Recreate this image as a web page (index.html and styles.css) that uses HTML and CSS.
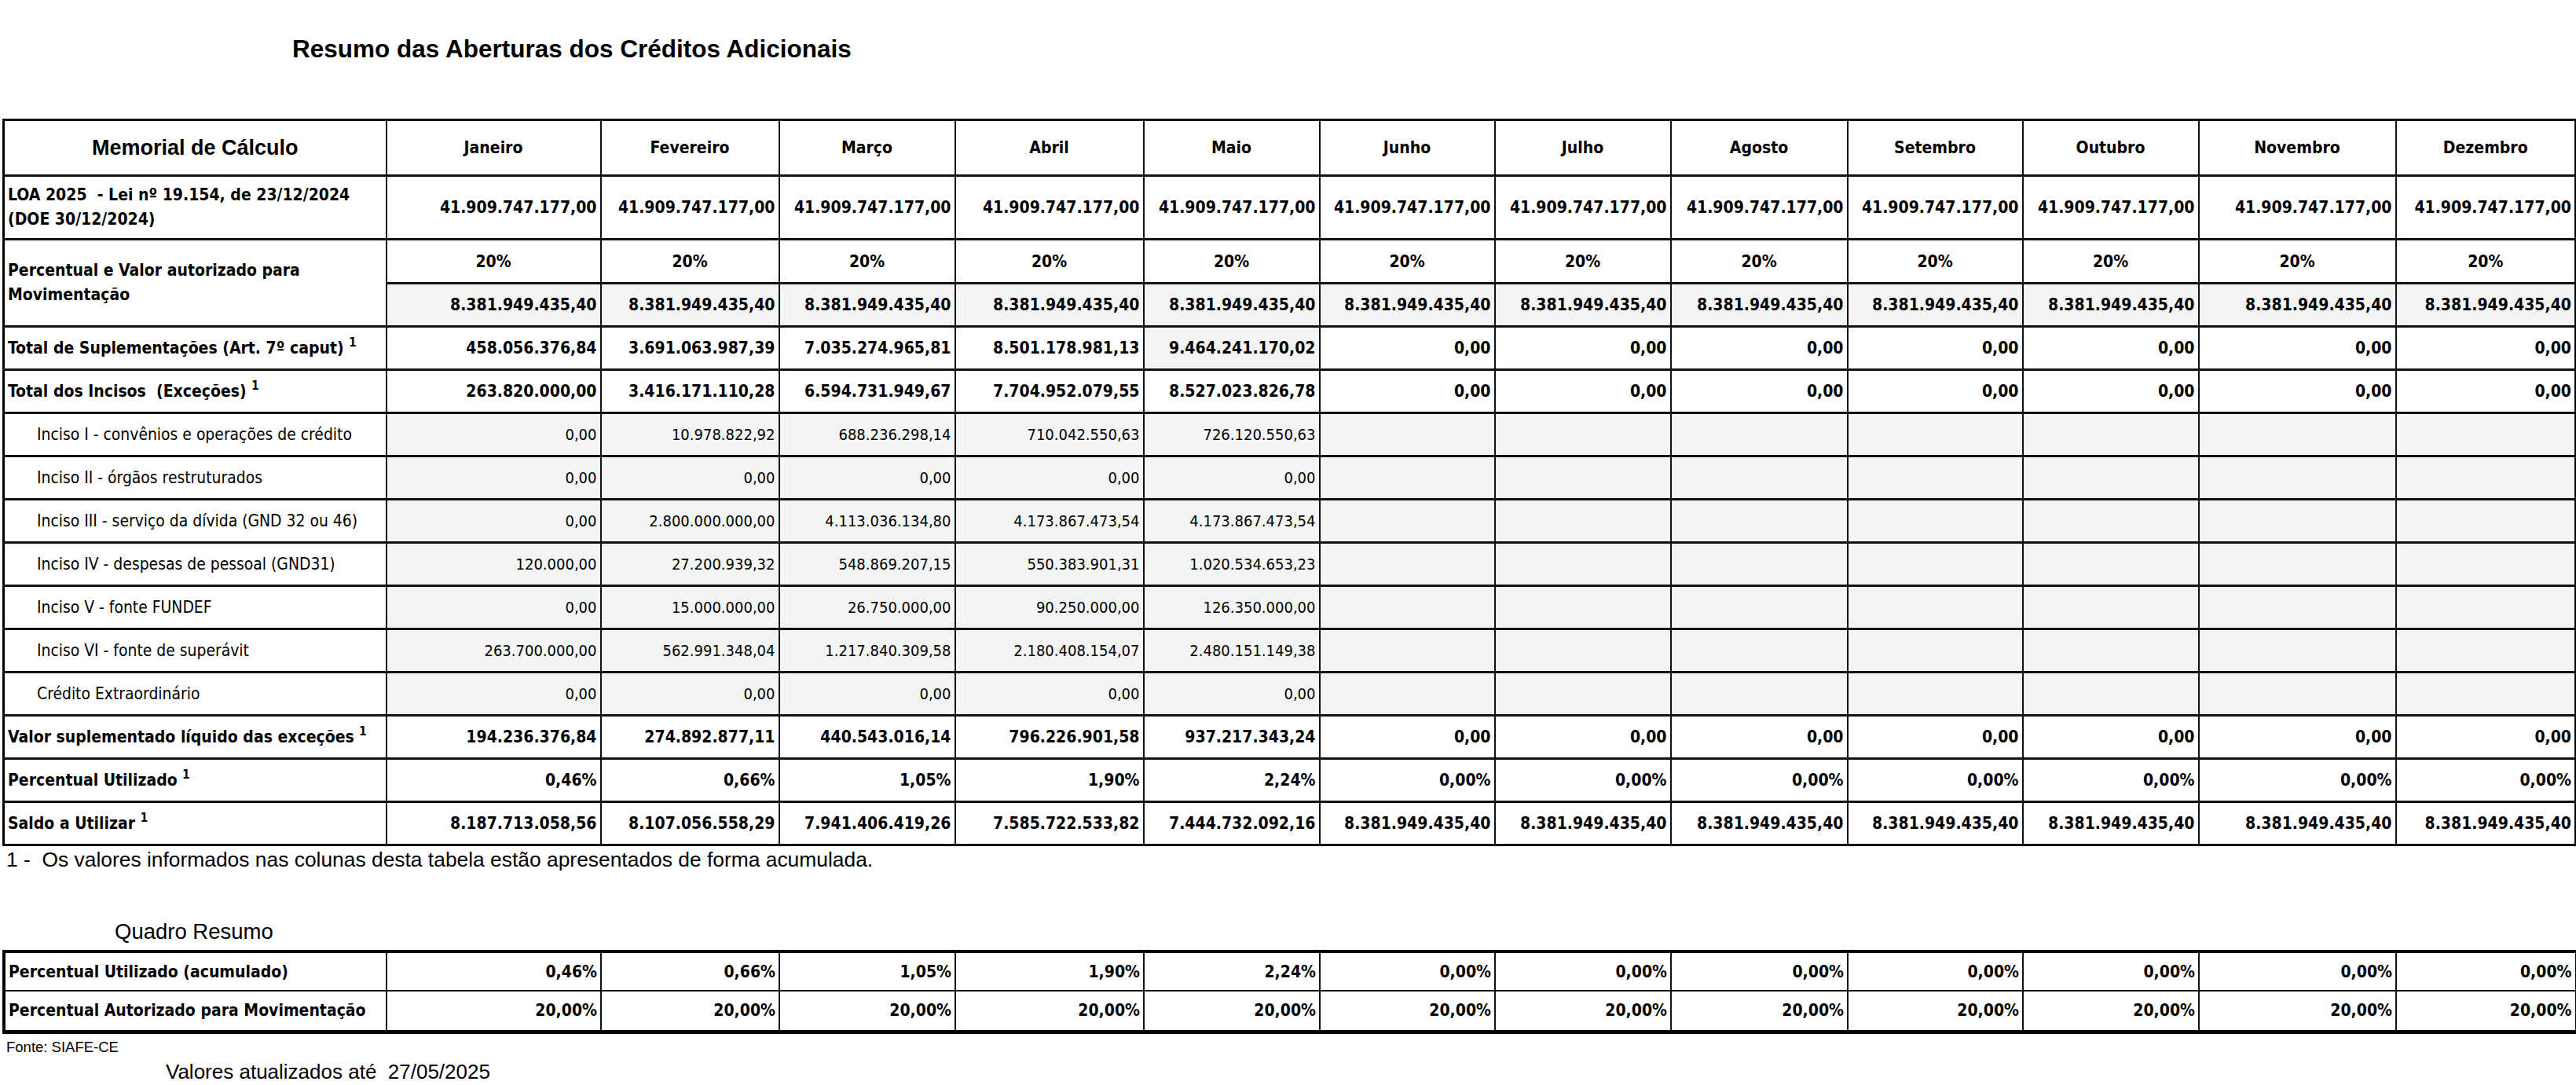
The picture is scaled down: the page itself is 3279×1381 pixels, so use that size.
FILE: index.html
```html
<!DOCTYPE html>
<html lang="pt-BR">
<head>
<meta charset="utf-8">
<title>Resumo das Aberturas dos Créditos Adicionais</title>
<link rel="stylesheet" href="styles.css">
</head>
<body>
<h1 class="title">Resumo das Aberturas dos Créditos Adicionais</h1>
<table class="grid memo">
<colgroup>
<col class="c-label"><col class="c-jan"><col class="c-fev"><col class="c-mar"><col class="c-abr"><col class="c-mai"><col class="c-jun"><col class="c-jul"><col class="c-ago"><col class="c-set"><col class="c-out"><col class="c-nov"><col class="c-dez">
</colgroup>
<tr class="r-head">
<th class="memorial">Memorial de Cálculo</th>
<th>Janeiro</th><th>Fevereiro</th><th>Março</th><th>Abril</th><th>Maio</th><th>Junho</th><th>Julho</th><th>Agosto</th><th>Setembro</th><th>Outubro</th><th>Novembro</th><th>Dezembro</th>
</tr>
<tr class="r-loa">
<td class="lab lab-loa">LOA 2025&nbsp; - Lei nº 19.154, de 23/12/2024<br>(DOE 30/12/2024)</td>
<td class="num">41.909.747.177,00</td><td class="num">41.909.747.177,00</td><td class="num">41.909.747.177,00</td><td class="num">41.909.747.177,00</td><td class="num">41.909.747.177,00</td><td class="num">41.909.747.177,00</td><td class="num">41.909.747.177,00</td><td class="num">41.909.747.177,00</td><td class="num">41.909.747.177,00</td><td class="num">41.909.747.177,00</td><td class="num">41.909.747.177,00</td><td class="num">41.909.747.177,00</td>
</tr>
<tr class="r-pct">
<td class="lab lab-two" rowspan="2">Percentual e Valor autorizado para<br>Movimentação</td>
<td class="ctr">20%</td><td class="ctr">20%</td><td class="ctr">20%</td><td class="ctr">20%</td><td class="ctr">20%</td><td class="ctr">20%</td><td class="ctr">20%</td><td class="ctr">20%</td><td class="ctr">20%</td><td class="ctr">20%</td><td class="ctr">20%</td><td class="ctr">20%</td>
</tr>
<tr class="r-val">
<td class="num shade">8.381.949.435,40</td><td class="num shade">8.381.949.435,40</td><td class="num shade">8.381.949.435,40</td><td class="num shade">8.381.949.435,40</td><td class="num shade">8.381.949.435,40</td><td class="num shade">8.381.949.435,40</td><td class="num shade">8.381.949.435,40</td><td class="num shade">8.381.949.435,40</td><td class="num shade">8.381.949.435,40</td><td class="num shade">8.381.949.435,40</td><td class="num shade">8.381.949.435,40</td><td class="num shade">8.381.949.435,40</td>
</tr>
<tr class="r-row">
<td class="lab">Total de Suplementações (Art. 7º caput) <sup>1</sup></td>
<td class="num">458.056.376,84</td><td class="num">3.691.063.987,39</td><td class="num">7.035.274.965,81</td><td class="num">8.501.178.981,13</td><td class="num shade">9.464.241.170,02</td><td class="num">0,00</td><td class="num">0,00</td><td class="num">0,00</td><td class="num">0,00</td><td class="num">0,00</td><td class="num">0,00</td><td class="num">0,00</td>
</tr>
<tr class="r-row">
<td class="lab">Total dos Incisos&nbsp; (Exceções) <sup>1</sup></td>
<td class="num">263.820.000,00</td><td class="num">3.416.171.110,28</td><td class="num">6.594.731.949,67</td><td class="num">7.704.952.079,55</td><td class="num">8.527.023.826,78</td><td class="num">0,00</td><td class="num">0,00</td><td class="num">0,00</td><td class="num">0,00</td><td class="num">0,00</td><td class="num">0,00</td><td class="num">0,00</td>
</tr>
<tr class="r-row r-sub">
<td class="lab sub">Inciso I - convênios e operações de crédito</td>
<td class="num shade">0,00</td><td class="num shade">10.978.822,92</td><td class="num shade">688.236.298,14</td><td class="num shade">710.042.550,63</td><td class="num shade">726.120.550,63</td><td class="shade"></td><td class="shade"></td><td class="shade"></td><td class="shade"></td><td class="shade"></td><td class="shade"></td><td class="shade"></td>
</tr>
<tr class="r-row r-sub">
<td class="lab sub">Inciso II - órgãos restruturados</td>
<td class="num shade">0,00</td><td class="num shade">0,00</td><td class="num shade">0,00</td><td class="num shade">0,00</td><td class="num shade">0,00</td><td class="shade"></td><td class="shade"></td><td class="shade"></td><td class="shade"></td><td class="shade"></td><td class="shade"></td><td class="shade"></td>
</tr>
<tr class="r-row r-sub">
<td class="lab sub">Inciso III - serviço da dívida (GND 32 ou 46)</td>
<td class="num shade">0,00</td><td class="num shade">2.800.000.000,00</td><td class="num shade">4.113.036.134,80</td><td class="num shade">4.173.867.473,54</td><td class="num shade">4.173.867.473,54</td><td class="shade"></td><td class="shade"></td><td class="shade"></td><td class="shade"></td><td class="shade"></td><td class="shade"></td><td class="shade"></td>
</tr>
<tr class="r-row r-sub">
<td class="lab sub">Inciso IV - despesas de pessoal (GND31)</td>
<td class="num shade">120.000,00</td><td class="num shade">27.200.939,32</td><td class="num shade">548.869.207,15</td><td class="num shade">550.383.901,31</td><td class="num shade">1.020.534.653,23</td><td class="shade"></td><td class="shade"></td><td class="shade"></td><td class="shade"></td><td class="shade"></td><td class="shade"></td><td class="shade"></td>
</tr>
<tr class="r-row r-sub">
<td class="lab sub">Inciso V - fonte FUNDEF</td>
<td class="num shade">0,00</td><td class="num shade">15.000.000,00</td><td class="num shade">26.750.000,00</td><td class="num shade">90.250.000,00</td><td class="num shade">126.350.000,00</td><td class="shade"></td><td class="shade"></td><td class="shade"></td><td class="shade"></td><td class="shade"></td><td class="shade"></td><td class="shade"></td>
</tr>
<tr class="r-row r-sub">
<td class="lab sub">Inciso VI - fonte de superávit</td>
<td class="num shade">263.700.000,00</td><td class="num shade">562.991.348,04</td><td class="num shade">1.217.840.309,58</td><td class="num shade">2.180.408.154,07</td><td class="num shade">2.480.151.149,38</td><td class="shade"></td><td class="shade"></td><td class="shade"></td><td class="shade"></td><td class="shade"></td><td class="shade"></td><td class="shade"></td>
</tr>
<tr class="r-row r-sub">
<td class="lab sub">Crédito Extraordinário</td>
<td class="num shade">0,00</td><td class="num shade">0,00</td><td class="num shade">0,00</td><td class="num shade">0,00</td><td class="num shade">0,00</td><td class="shade"></td><td class="shade"></td><td class="shade"></td><td class="shade"></td><td class="shade"></td><td class="shade"></td><td class="shade"></td>
</tr>
<tr class="r-row">
<td class="lab">Valor suplementado líquido das exceções <sup>1</sup></td>
<td class="num">194.236.376,84</td><td class="num">274.892.877,11</td><td class="num">440.543.016,14</td><td class="num">796.226.901,58</td><td class="num">937.217.343,24</td><td class="num">0,00</td><td class="num">0,00</td><td class="num">0,00</td><td class="num">0,00</td><td class="num">0,00</td><td class="num">0,00</td><td class="num">0,00</td>
</tr>
<tr class="r-row">
<td class="lab">Percentual Utilizado <sup>1</sup></td>
<td class="num">0,46%</td><td class="num">0,66%</td><td class="num">1,05%</td><td class="num">1,90%</td><td class="num">2,24%</td><td class="num">0,00%</td><td class="num">0,00%</td><td class="num">0,00%</td><td class="num">0,00%</td><td class="num">0,00%</td><td class="num">0,00%</td><td class="num">0,00%</td>
</tr>
<tr class="r-row">
<td class="lab">Saldo a Utilizar <sup>1</sup></td>
<td class="num">8.187.713.058,56</td><td class="num">8.107.056.558,29</td><td class="num">7.941.406.419,26</td><td class="num">7.585.722.533,82</td><td class="num">7.444.732.092,16</td><td class="num">8.381.949.435,40</td><td class="num">8.381.949.435,40</td><td class="num">8.381.949.435,40</td><td class="num">8.381.949.435,40</td><td class="num">8.381.949.435,40</td><td class="num">8.381.949.435,40</td><td class="num">8.381.949.435,40</td>
</tr>
</table>
<p class="note">1 -&nbsp; Os valores informados nas colunas desta tabela estão apresentados de forma acumulada.</p>
<h2 class="quadro">Quadro Resumo</h2>
<table class="grid resumo">
<colgroup>
<col class="c-label"><col class="c-jan"><col class="c-fev"><col class="c-mar"><col class="c-abr"><col class="c-mai"><col class="c-jun"><col class="c-jul"><col class="c-ago"><col class="c-set"><col class="c-out"><col class="c-nov"><col class="c-dez">
</colgroup>
<tr class="r-sum r-sum-1">
<td class="lab">Percentual Utilizado (acumulado)</td>
<td class="num">0,46%</td><td class="num">0,66%</td><td class="num">1,05%</td><td class="num">1,90%</td><td class="num">2,24%</td><td class="num">0,00%</td><td class="num">0,00%</td><td class="num">0,00%</td><td class="num">0,00%</td><td class="num">0,00%</td><td class="num">0,00%</td><td class="num">0,00%</td>
</tr>
<tr class="r-sum r-sum-2">
<td class="lab">Percentual Autorizado para Movimentação</td>
<td class="num">20,00%</td><td class="num">20,00%</td><td class="num">20,00%</td><td class="num">20,00%</td><td class="num">20,00%</td><td class="num">20,00%</td><td class="num">20,00%</td><td class="num">20,00%</td><td class="num">20,00%</td><td class="num">20,00%</td><td class="num">20,00%</td><td class="num">20,00%</td>
</tr>
</table>
<p class="fonte">Fonte: SIAFE-CE</p>
<p class="atual">Valores atualizados até&nbsp; 27/05/2025</p>
</body>
</html>
```
FILE: styles.css
```css
html, body {
  margin: 0;
  padding: 0;
  background: #ffffff;
  color: #000000;
}

body {
  font-family: "Liberation Sans", Arial, sans-serif;
}

.title {
  margin: 0;
  padding: 44px 0 0 372px;
  height: 36px;
  font-size: 31.5px;
  line-height: 36px;
  font-weight: bold;
}

.grid {
  border-collapse: collapse;
  table-layout: fixed;
  width: 3274px;
  margin-left: 3px;
  font-family: "DejaVu Sans Condensed", "DejaVu Sans", sans-serif;
  font-stretch: condensed;
  font-weight: bold;
  font-size: 21px;
}

.memo {
  margin-top: 71px;
  border: 3px solid #000;
}

.c-label { width: 487px; }
.c-jan { width: 273px; }
.c-fev { width: 227px; }
.c-mar { width: 224px; }
.c-abr { width: 240px; }
.c-mai { width: 224px; }
.c-jun { width: 223px; }
.c-jul { width: 224px; }
.c-ago { width: 225px; }
.c-set { width: 223px; }
.c-out { width: 224px; }
.c-nov { width: 251px; }
.c-dez { width: 229px; }

.grid th,
.grid td {
  border-top: 3px solid #111;
  border-bottom: 3px solid #111;
  border-left: 2px solid #111;
  border-right: 2px solid #111;
  padding: 0 4px;
  vertical-align: middle;
  white-space: nowrap;
  overflow: hidden;
}

.grid th {
  font-weight: bold;
  text-align: center;
}

.memo .memorial {
  font-family: "Liberation Sans", Arial, sans-serif;
  font-stretch: normal;
  font-size: 27px;
}

.r-head { height: 71px; }
.r-loa { height: 81px; }
.r-pct { height: 56px; }
.r-val { height: 55px; }
.r-row { height: 55px; }

.lab {
  text-align: left;
}

.lab-loa,
.lab-two {
  line-height: 31px;
}

.lab sup {
  font-size: 15px;
  vertical-align: 9px;
  line-height: 0;
}

.grid .sub {
  font-weight: normal;
  font-size: 20.9px;
  padding-left: 41px;
}

.r-sub .num {
  font-weight: normal;
  font-size: 20px;
}

.num {
  text-align: right;
}

.ctr {
  text-align: center;
}

.shade {
  background: #f3f5f4;
}

.note {
  margin: 2px 0 0 8px;
  font-size: 26.4px;
  line-height: 30px;
}

.quadro {
  margin: 62px 0 0 146px;
  font-size: 27.5px;
  line-height: 30px;
  font-weight: normal;
}

.resumo {
  margin-top: 8px;
  border-top: 4px solid #000;
  border-bottom: 5px solid #000;
  border-left: 4px solid #000;
  border-right: 3px solid #000;
}

.resumo .r-sum-1 { height: 50px; }
.resumo .r-sum-2 { height: 52px; }

.resumo td {
  border-top: 2px solid #111;
  border-bottom: 2px solid #111;
}

.fonte {
  margin: 6px 0 0 8px;
  font-size: 18.5px;
  line-height: 22px;
}

.atual {
  margin: 5px 0 0 211px;
  font-size: 26px;
  line-height: 30px;
}
```
